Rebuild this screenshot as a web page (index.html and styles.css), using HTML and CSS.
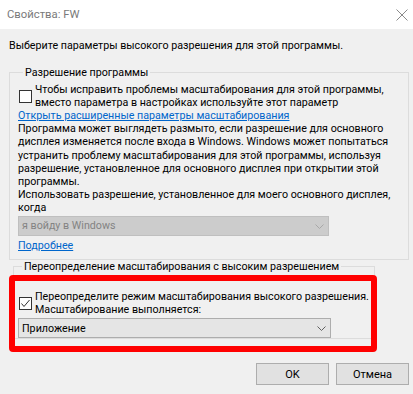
FILE: index.html
```html
<!DOCTYPE html>
<html lang="ru">
<head>
    <meta charset="UTF-8">
    <title>Свойства: FW</title>
    <link rel="stylesheet" href="styles.css">
</head>
<body>
    <div class="window">
        <div class="titlebar">
            <span class="title">Свойства: FW</span>
            <svg class="close" width="12" height="12" viewBox="0 0 12 12">
                <path d="M0.5 0.5 L11.5 11.5 M11.5 0.5 L0.5 11.5" stroke="#8a8a8a" stroke-width="1" fill="none"/>
            </svg>
        </div>

        <div class="content">
            <p class="intro">Выберите параметры высокого разрешения для этой программы.</p>

            <fieldset class="group group-app">
                <legend>Разрешение программы</legend>
                <label class="check">
                    <span class="box"></span>
                    <span class="check-text">Чтобы исправить проблемы масштабирования для этой программы,<br>вместо параметра в настройках используйте этот параметр</span>
                </label>
                <a class="link" href="#">Открыть расширенные параметры масштабирования</a>
                <p>Программа может выглядеть размыто, если разрешение для основного дисплея изменяется после входа в Windows. Windows может попытаться устранить проблему масштабирования для этой программы, используя разрешение, установленное для основного дисплея при открытии этой программы.</p>
                <p>Использовать разрешение, установленное для моего основного дисплея, когда</p>
                <div class="combo combo-disabled">
                    <span>я войду в Windows</span>
                    <svg class="chevron" width="9" height="5" viewBox="0 0 9 5">
                        <path d="M0.5 0.5 L4.5 4.5 L8.5 0.5" stroke="#a8a8a8" stroke-width="1" fill="none"/>
                    </svg>
                </div>
                <a class="link link-more" href="#">Подробнее</a>
            </fieldset>

            <fieldset class="group group-override">
                <legend>Переопределение масштабирования с высоким разрешением</legend>
                <label class="check">
                    <span class="box checked">
                        <svg width="11" height="11" viewBox="0 0 11 11">
                            <path d="M1.5 5.5 L4 8.5 L9.5 2" stroke="#333" stroke-width="1" fill="none"/>
                        </svg>
                    </span>
                    <span class="check-text">Переопределите режим масштабирования высокого разрешения.<br>Масштабирование выполняется:</span>
                </label>
                <div class="combo">
                    <span>Приложение</span>
                    <svg class="chevron" width="9" height="5" viewBox="0 0 9 5">
                        <path d="M0.5 0.5 L4.5 4.5 L8.5 0.5" stroke="#606060" stroke-width="1" fill="none"/>
                    </svg>
                </div>
            </fieldset>

            <div class="buttons">
                <button>OK</button>
                <button>Отмена</button>
            </div>
        </div>

        <div class="highlight"></div>
    </div>
</body>
</html>
```

FILE: styles.css
```css
* {
    margin: 0;
    padding: 0;
    box-sizing: border-box;
}

body {
    width: 413px;
    height: 394px;
    overflow: hidden;
    background-color: #f0f0f0;
    font-family: Roboto, "Noto Sans", sans-serif;
    font-size: 10.7px;
    line-height: 13.1px;
    color: #000;
}

.window {
    position: relative;
    height: 394px;
}

.titlebar {
    height: 29px;
    background-color: #fff;
    display: flex;
    align-items: center;
    justify-content: space-between;
    padding: 0 5px 0 7px;
}

.title {
    color: #7a7a7a;
    font-size: 11.3px;
}

.content {
    padding: 10px 4px 0 9px;
}

.intro {
    margin-bottom: 14px;
}

.group {
    border: 1px solid #dcdcdc;
}

.group legend {
    padding: 0 2px;
    line-height: 13px;
}

.group-app {
    width: 400px;
    padding: 4px 8px 7px 8px;
}

.group-app legend {
    margin-left: 5px;
}

.group-override {
    width: 362px;
    margin-left: 4px;
    padding: 17px 4px 0 4px;
}

.group-override legend {
    margin-left: 4px;
}

.check {
    display: flex;
    align-items: center;
    gap: 3px;
}

.check-text {
    white-space: nowrap;
}

.box {
    width: 13px;
    height: 13px;
    margin-left: 1px;
    flex-shrink: 0;
    background-color: #fff;
    border: 1px solid #333;
    display: flex;
    align-items: center;
    justify-content: center;
}

.link {
    display: block;
    color: #0066cc;
    text-decoration: underline;
}

.link-more {
    display: inline-block;
    margin-top: 3px;
}

.combo {
    width: 313px;
    height: 20px;
    margin-top: 2px;
    background-color: #e5e5e5;
    border: 1px solid #adadad;
    display: flex;
    align-items: center;
    justify-content: space-between;
    padding: 0 4px 0 3px;
}

.combo-disabled {
    width: 311px;
    background-color: #cccccc;
    border-color: #bfbfbf;
    color: #838383;
}

.buttons {
    display: flex;
    justify-content: flex-end;
    gap: 7px;
    margin-top: 24px;
}

.buttons button {
    width: 73px;
    height: 22px;
    background-color: #e1e1e1;
    border: 1px solid #adadad;
    font-family: inherit;
    font-size: 11px;
    color: #000;
}

.highlight {
    position: absolute;
    left: 9px;
    top: 275px;
    width: 368px;
    height: 77px;
    border: 6px solid #ff0000;
    border-radius: 4px;
}
```
